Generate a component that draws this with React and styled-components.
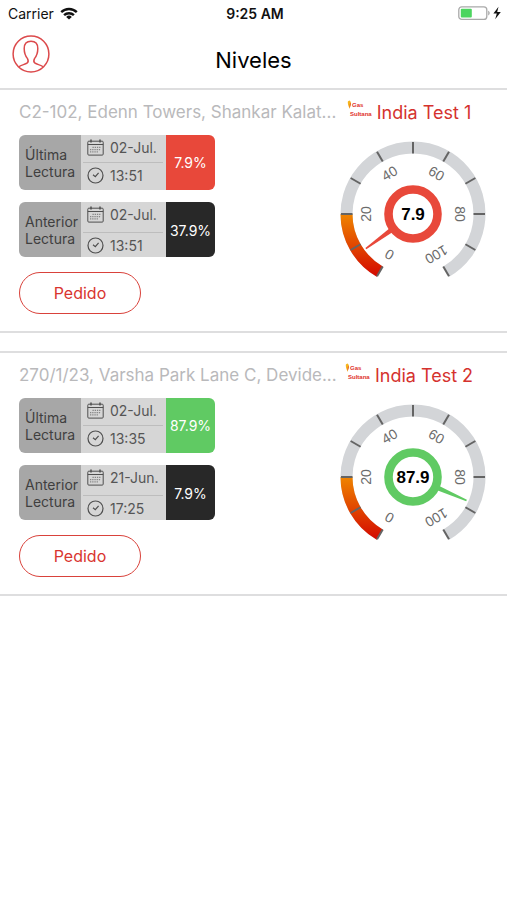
import styled, { createGlobalStyle } from "styled-components";

const GlobalStyle = createGlobalStyle`
  * {
    box-sizing: border-box;
  }
  body {
    background-color: white;
    font-family: Inter, "Liberation Sans", sans-serif;
    margin: 0;
  }
  button {
    cursor: pointer;
    font-family: inherit;
  }
`;

const StatusBar = styled.div`
  align-items: center;
  color: #111;
  display: grid;
  font-size: 14px;
  grid-template-columns: 1fr auto 1fr;
  height: 28px;
  padding: 0 5px 2px 8px;
`;

const Carrier = styled.div`
  align-items: center;
  display: flex;
  gap: 6px;
`;

const Clock = styled.div`
  font-weight: 600;
`;

const Battery = styled.div`
  display: flex;
  justify-content: flex-end;
`;

const Header = styled.header`
  align-items: center;
  display: grid;
  grid-template-columns: 1fr auto 1fr;
  height: 60px;
  padding: 0 12px;
`;

const ProfileButton = styled.button`
  background: none;
  border: none;
  height: 38px;
  margin-bottom: 8px;
  padding: 0;
  width: 38px;
`;

const Title = styled.h1`
  font-size: 22px;
  font-weight: 400;
  line-height: 28px;
  margin: 4px 0 0;
`;

const TankList = styled.main`
  display: grid;
  gap: 18px;
`;

const TankCard = styled.section`
  border-bottom: 2px solid #dededf;
  border-top: 2px solid #dededf;
  display: grid;
  gap: 10px;
  grid-template-columns: minmax(0, 1fr) 146px;
  padding: 10px 21px 17px 19px;
`;

const Info = styled.div`
  display: flex;
  flex-direction: column;
`;

const Address = styled.p`
  color: #b9b9bb;
  font-size: 17px;
  line-height: 24px;
  margin: 0 0 11px;
  white-space: nowrap;
`;

const Readings = styled.div`
  display: grid;
  gap: 12px;
  margin-bottom: 15px;
`;

const ReadingRow = styled.div`
  border-radius: 6px;
  display: grid;
  grid-template-columns: 62px 85px 49px;
  height: 55px;
  overflow: hidden;
  width: 196px;
`;

const ReadingLabel = styled.div`
  align-items: center;
  background-color: #a7a7a7;
  color: #3f3f3f;
  display: flex;
  font-size: 14px;
  line-height: 17px;
  padding-left: 6px;
`;

const ReadingTime = styled.div`
  background-color: #d6d6d6;
  color: #555;
  display: grid;
  font-size: 14px;
  grid-template-rows: ${(props) => (props.$previous ? "31px" : "28px")} 1fr;
  line-height: 25px;
  padding: 0 3px 0 2px;
`;

const TimeLine = styled.div`
  align-items: flex-start;
  display: flex;
  gap: 6px;
  padding-left: 4px;
  :first-child& {
    border-bottom: 1px solid #bdbdbd;
  }
  svg {
    flex: none;
    margin-top: 4px;
  }
`;

const Percent = styled.div`
  align-items: center;
  background-color: ${(props) => props.$color};
  color: white;
  display: flex;
  font-size: 14px;
  justify-content: center;
`;

const OrderButton = styled.button`
  background-color: white;
  border: 1px solid #d9423b;
  border-radius: 21px;
  color: #d9352f;
  font-size: 16px;
  height: 42px;
  width: 122px;
`;

const Tank = styled.div`
  align-items: center;
  display: flex;
  flex-direction: column;
  gap: 15px;
`;

const TankName = styled.h2`
  align-items: flex-start;
  color: #d5322e;
  display: flex;
  font-size: 18px;
  font-weight: 400;
  gap: 4px;
  line-height: 26px;
  margin: 0;
  padding-right: 8px;
  white-space: nowrap;
`;

const RED = "#e8483a";
const GREEN = "#60ca63";
const BLACK = "#282828";

const tanks = [
  {
    name: "India Test 1",
    address: "C2-102, Edenn Towers, Shankar Kalat...",
    level: 7.9,
    color: RED,
    last: { date: "02-Jul.", time: "13:51", percent: "7.9%" },
    previous: { date: "02-Jul.", time: "13:51", percent: "37.9%" },
  },
  {
    name: "India Test 2",
    address: "270/1/23, Varsha Park Lane C, Devide...",
    level: 87.9,
    color: GREEN,
    last: { date: "02-Jul.", time: "13:35", percent: "87.9%" },
    previous: { date: "21-Jun.", time: "17:25", percent: "7.9%" },
  },
];

const WifiIcon = () => (
  <svg width="18" height="13" viewBox="0 0 18 13" fill="none" stroke="#111" strokeWidth="2.4">
    <path d="M1.2 5.2a11.2 11.2 0 0 1 15.6 0" />
    <path d="M4.1 8.2a7 7 0 0 1 9.8 0" />
    <path d="M9 12.6 6.2 9.9a4 4 0 0 1 5.6 0z" fill="#111" stroke="none" />
  </svg>
);

const BatteryIcon = () => (
  <svg width="44" height="16" viewBox="0 0 44 16">
    <rect x="0.8" y="1.8" width="28" height="12.6" rx="3" fill="white" stroke="#a9a9a9" strokeWidth="1.3" />
    <rect x="2.8" y="3.8" width="11" height="8.6" rx="1" fill="#4cd55f" />
    <path d="M30.2 5.8c2 .6 2 4 0 4.6z" fill="#a9a9a9" />
    <path d="M40.5 1.8 35.4 8.6h3.4l-1.6 5.6 5.6-7.2h-3.6z" fill="#111" />
  </svg>
);

const ProfileIcon = () => (
  <svg width="38" height="38" viewBox="0 0 38 38" fill="none" stroke="#dc4a4c" strokeWidth="1.5">
    <circle cx="19" cy="19" r="17.9" />
    <path d="M7 31.8c1.6-1.8 5.8-2.2 8-3.6 1.2-.8 1.3-3 .5-4.6-2.2-2.8-3.3-6.2-3.3-10.2 0-4.8 2.7-7.2 6.8-7.2s6.8 2.4 6.8 7.2c0 4-1.1 7.4-3.3 10.2-.8 1.6-.7 3.8.5 4.6 2.2 1.4 6.4 1.8 8 3.6" />
  </svg>
);

const CalendarIcon = () => (
  <svg width="17" height="17" viewBox="0 0 17 17" fill="none" stroke="#4f4f4f">
    <rect x="0.8" y="2.2" width="15.4" height="13.9" rx="1" />
    <path d="M0.8 5.5h15.4" />
    <path d="M4 .4v3.2M13 .4v3.2" strokeWidth="1.5" />
    <path d="M5.5 8.3h8.5M3 10.6h11M3 12.9h8.5" stroke="#858585" strokeWidth="1.3" strokeDasharray="1.3 .9" />
  </svg>
);

const ClockIcon = () => (
  <svg width="17" height="17" viewBox="0 0 17 17" fill="none" stroke="#4f4f4f" strokeWidth="1.2">
    <circle cx="8.5" cy="8.5" r="7.5" />
    <path d="m6 7.7 2.3 2 3.3-3.9" />
  </svg>
);

const Logo = () => (
  <svg
    width="26"
    height="20"
    viewBox="0 0 26 20"
    fill="#e0322b"
    fontFamily="'Liberation Sans Narrow', 'Liberation Sans', sans-serif"
    fontSize="6"
    fontWeight="700"
  >
    <path d="M1 .8c1 1 1.2.2 1.3-.5C4 1.6 4.4 3.6 3.4 5.2c-.4 1-.6 2.4-.7 3.8C1.7 6.700.2 3.400 1 .8z" fill="#f6b51c" />
    <path d="M3.500 2.600c.8 1.600.1 3.400-.8 5.400-.3-1.500-.2-3.900.8-5.400z" fill="#e8582b" />
    <text x="5" y="7">Gas</text>
    <text x="3" y="16">Sultana</text>
  </svg>
);

// The dial sweeps 300 degrees, starting 150 degrees left of the top
const toAngle = (value) => -150 + value * 3;

const toPoint = (value, radius) => {
  const rad = (toAngle(value) * Math.PI) / 180;
  return `${radius * Math.sin(rad)} ${-radius * Math.cos(rad)}`;
};

const arc = (from, to, radius) => {
  const large = to - from > 60 ? 1 : 0;
  return `M${toPoint(from, radius)}A${radius} ${radius} 0 ${large} 1 ${toPoint(to, radius)}`;
};

const ticks = [0, 10, 20, 30, 40, 50, 60, 70, 80, 90, 100];
const labels = [0, 20, 40, 60, 80, 100];

const Gauge = ({ id, value, color }) => (
  <svg width="146" height="140" viewBox="-73 -73 146 140" fontFamily="'Liberation Sans', sans-serif">
    <defs>
      <linearGradient id={id} gradientUnits="userSpaceOnUse" x1="0" y1="0" x2="0" y2="62">
        <stop offset="0" stopColor="#ef8400" />
        <stop offset="1" stopColor="#d40a00" />
      </linearGradient>
    </defs>
    <path d={arc(0, 100, 66.5)} fill="none" stroke="#d3d5d8" strokeWidth="12" />
    <path d={arc(0, 20, 66.5)} fill="none" stroke={`url(#${id})`} strokeWidth="12" />
    {ticks.map((tick) => (
      <path key={tick} d="M0 -72V-60.5" stroke="#646464" strokeWidth="2" transform={`rotate(${toAngle(tick)})`} />
    ))}
    {labels.map((label) => (
      <text
        key={label}
        y="-42"
        fill="#6b6b6b"
        fontSize="14"
        textAnchor="middle"
        transform={`rotate(${toAngle(label)})`}
      >
        {label}
      </text>
    ))}
    <path d="M-2.5 -26 -.8 -58.5H.8L2.5 -26z" fill={color} transform={`rotate(${toAngle(value)})`} />
    <circle r="24.5" fill="white" stroke={color} strokeWidth="8.6" />
    <text y="6" fill="black" fontSize="17" fontWeight="700" textAnchor="middle">
      {value}
    </text>
  </svg>
);

const Reading = ({ label, reading, color, previous }) => (
  <ReadingRow>
    <ReadingLabel>
      {label}
      <br />
      Lectura
    </ReadingLabel>
    <ReadingTime $previous={previous}>
      <TimeLine>
        <CalendarIcon />
        {reading.date}
      </TimeLine>
      <TimeLine>
        <ClockIcon />
        {reading.time}
      </TimeLine>
    </ReadingTime>
    <Percent $color={color}>{reading.percent}</Percent>
  </ReadingRow>
);

const App = () => (
  <>
    <GlobalStyle />
    <StatusBar>
      <Carrier>
        Carrier
        <WifiIcon />
      </Carrier>
      <Clock>9:25 AM</Clock>
      <Battery>
        <BatteryIcon />
      </Battery>
    </StatusBar>
    <Header>
      <ProfileButton type="button" aria-label="Perfil">
        <ProfileIcon />
      </ProfileButton>
      <Title>Niveles</Title>
    </Header>
    <TankList>
      {tanks.map((tank, idx) => (
        <TankCard key={tank.name}>
          <Info>
            <Address>{tank.address}</Address>
            <Readings>
              <Reading label="Última" reading={tank.last} color={tank.color} />
              <Reading label="Anterior" reading={tank.previous} color={BLACK} previous />
            </Readings>
            <OrderButton type="button">Pedido</OrderButton>
          </Info>
          <Tank>
            <TankName>
              <Logo />
              {tank.name}
            </TankName>
            <Gauge id={`low-level-${idx}`} value={tank.level} color={tank.color} />
          </Tank>
        </TankCard>
      ))}
    </TankList>
  </>
);

export default App;
